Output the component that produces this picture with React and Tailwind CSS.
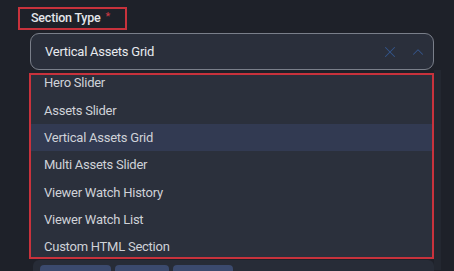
import { X, ChevronUp } from "lucide-react";

const options = [
  "Hero Slider",
  "Assets Slider",
  "Vertical Assets Grid",
  "Multi Assets Slider",
  "Viewer Watch History",
  "Viewer Watch List",
  "Custom HTML Section",
];

export default function App() {
  const selected = "Vertical Assets Grid";

  return (
    <div className="w-[454px] h-[271px] overflow-hidden bg-[#1e2129] font-['Roboto',sans-serif]">
      <div className="flex pt-[7px] pl-[18px]">
        <div className="flex items-center h-[23px] w-[109px] pl-[11px] border-2 border-[#c8323c]">
          <span className="text-[12.5px] font-medium tracking-[-0.2px] text-[#e4e6ea]">Section Type</span>
          <span className="ml-[5px] text-[11px] text-[#d03a44] -mt-[3px]">*</span>
        </div>
      </div>

      <div className="ml-[30px] mt-[3px] w-[404px] h-[37px] flex items-center rounded-[9px] border border-[#7a7f8a] bg-[#2a2f3b] pl-[14px] pr-[6px]">
        <span className="flex-1 text-[13px] tracking-[-0.25px] text-[#e8eaee]">{selected}</span>
        <X size={18} strokeWidth={1.4} className="text-[#34558a] mr-[10px]" />
        <ChevronUp size={18} strokeWidth={1.4} className="text-[#34558a]" />
      </div>

      <div className="flex">
        <div className="relative ml-[30px] w-[404px]">
          <div className="absolute left-[3px] right-0 top-[190px] h-[20px] bg-[#272c37] rounded-t-[6px] flex gap-[4px] pl-[7px] pt-[5px]">
            <div className="w-[71px] h-[10px] rounded-[4px] bg-[#3b4a6e]" />
            <div className="w-[54px] h-[10px] rounded-[4px] bg-[#3b4a6e]" />
            <div className="w-[60px] h-[10px] rounded-[4px] bg-[#3b4a6e]" />
          </div>
          <div className="relative -ml-[1px] mt-[3px] h-[186px] border-2 border-[#c8323c] bg-[#2b303c] overflow-hidden">
            <div className="-mt-[5.5px]">
              {options.map((o) => (
                <div
                  key={o}
                  className={`h-[27.3px] flex items-center pl-[13px] text-[13px] tracking-[-0.25px] text-[#cfd2d8] ${o === selected ? "bg-[#323a52]" : ""}`}
                >
                  {o}
                </div>
              ))}
            </div>
          </div>
        </div>
        <div className="w-[7px] h-[200px] bg-[#232730]" />
      </div>
    </div>
  );
}
